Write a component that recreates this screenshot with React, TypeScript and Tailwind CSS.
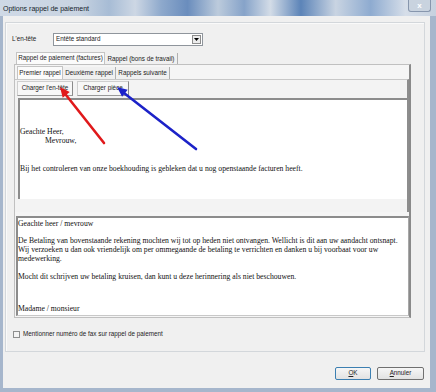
import React from "react";

function Tab({ label, w, active }: { label: string; w: string; active?: boolean }) {
  return (
    <div
      className={
        "h-full flex items-center justify-center border-r border-[#b0b0b0] whitespace-nowrap " +
        w +
        (active ? " bg-[#fbfbfb] border-l border-t border-[#c4c4c4] -mb-px relative z-10" : " bg-[#f0f0f0] mt-[1px]")
      }
    >
      {label}
    </div>
  );
}

export default function App() {
  return (
    <div className="relative w-[436px] h-[392px] overflow-hidden bg-[#f0f0f0] flex flex-col font-['Liberation_Sans',Arial,sans-serif] text-[6.3px] leading-none text-[#222]">
      {/* title bar */}
      <div className="relative h-[16px] shrink-0 flex items-center pl-[3px] bg-[linear-gradient(90deg,#cfd9e6_0%,#c8d3e1_18%,#a7bcd5_25%,#cdd7e4_31%,#8ea9cc_37%,#6a8dbd_43%,#bccbdc_50%,#86a3c9_56%,#d3dce7_62%,#5c84b8_69%,#c9d4e2_77%,#8eabd0_85%,#d6dee9_93%,#c6d1df_100%)]">
        <span className="text-[7px] text-[#141d2b]">Options rappel de paiement</span>
        <div className="absolute right-[5px] top-0 w-[23px] h-[12px] bg-[#c9d3df] border border-t-0 border-[#8796ad] rounded-b-[3px] flex items-center justify-center text-[8px] text-white font-bold">
          x
        </div>
      </div>

      {/* client */}
      <div className="flex-1 border-l-[3px] border-r-[6px] border-b-[4px] border-[#a6b6cc] flex flex-col">
        {/* group panel */}
        <div className="ml-[2px] mt-[6px] w-[420px] h-[330px] border border-[#d3d7db] shadow-[inset_1px_1px_0_#fafafa] flex flex-col">
          {/* header select row */}
          <div className="mt-[10px] h-[13px] flex items-center">
            <div className="pl-[6px] w-[47px]">L'en-tête</div>
            <div className="w-[150px] h-[13px] bg-white border border-[#8f959c] flex items-center pl-[2px] relative">
              <span>Entête standard</span>
              <div className="absolute right-[1px] top-[1px] w-[9px] h-[9px] border border-[#8d8d8d] bg-[#ececec] flex items-center justify-center">
                <svg width="5" height="3" viewBox="0 0 5 3">
                  <polygon points="0,0 5,0 2.5,3" fill="#000" />
                </svg>
              </div>
            </div>
          </div>

          {/* outer tabs */}
          <div className="mt-[6px] ml-[8px] pl-[2px] h-[12px] flex">
            <Tab label="Rappel de paiement (factures)" w="w-[89px]" active />
            <Tab label="Rappel (bons de travail)" w="w-[73px]" />
          </div>
          <div className="ml-[8px] w-[397px] h-[254px] border border-[#c0c0c0] border-r-[2px] border-r-[#8a8a8a] bg-[#f5f5f5] flex flex-col">
            {/* inner tabs */}
            <div className="mt-[1px] pl-[2px] h-[13px] flex">
              <Tab label="Premier rappel" w="w-[46px]" active />
              <Tab label="Deuxième rappel" w="w-[53px]" />
              <Tab label="Rappels suivante" w="w-[54px]" />
            </div>
            <div className="w-[394px] h-[133px] border-t border-[#c8c8c8] border-r-[2px] border-r-[#8d8d8d] bg-[#f3f3f3] flex flex-col">
              {/* buttons */}
              <div className="mt-[1px] pl-[2px] h-[16px] flex gap-[4px]">
                <div className="w-[56px] h-[15px] border border-[#cfcfcf] border-r-[#8a8a8a] border-b-[#9a9a9a] bg-[#f7f7f7] flex items-center justify-center">
                  Charger l'en-tête
                </div>
                <div className="w-[52px] h-[15px] border border-[#cfcfcf] border-r-[#8a8a8a] border-b-[#9a9a9a] bg-[#f7f7f7] flex items-center justify-center">
                  Charger pièce
                </div>
              </div>
              {/* editor 1 */}
              <div className="mt-[1px] ml-[3px] w-[389px] h-[101px] bg-white border-t-2 border-l-2 border-[#8c8c8c] font-['Liberation_Serif','Times_New_Roman',serif] text-[7.7px] leading-[8.9px] text-[#111] pt-[28px] whitespace-nowrap">
                <div>Geachte Heer,</div>
                <div className="pl-[25px]">Mevrouw,</div>
                <div className="h-[19px]" />
                <div>Bij het controleren van onze boekhouding is gebleken dat u nog openstaande facturen heeft.</div>
              </div>
            </div>
            {/* editor 2 */}
            <div className="mt-[4px] ml-[1px] w-[393px] h-[100px] bg-white border-t-2 border-l-2 border-[#8c8c8c] border-r border-b border-r-[#a8a8a8] border-b-[#c8c8c8] font-['Liberation_Serif','Times_New_Roman',serif] text-[7.7px] leading-[8.7px] text-[#111] pt-[2px] whitespace-nowrap overflow-hidden">
              <div>Geachte heer / mevrouw</div>
              <div className="h-[8.7px]" />
              <div>De Betaling van bovenstaande rekening mochten wij tot op heden niet ontvangen. Wellicht is dit aan uw aandacht ontsnapt.</div>
              <div>Wij verzoeken u dan ook vriendelijk om per ommegaande de betaling te verrichten en danken u bij voorbaat voor uw</div>
              <div>medewerking.</div>
              <div className="h-[9px]" />
              <div>Mocht dit schrijven uw betaling kruisen, dan kunt u deze herinnering als niet beschouwen.</div>
              <div className="h-[24px]" />
              <div>Madame / monsieur</div>
            </div>
          </div>

          {/* checkbox */}
          <div className="mt-[13px] pl-[7px] flex items-center gap-[3px]">
            <div className="w-[7px] h-[7px] border border-[#8e8f8f] bg-[#f4f4f4]" />
            <span>Mentionner numéro de fax sur rappel de paiement</span>
          </div>
        </div>

        {/* bottom buttons */}
        <div className="mt-[15px] pr-[6px] flex justify-end gap-[6px]">
          <div className="w-[36px] h-[13px] rounded-[2px] border border-[#3c7fb1] bg-[linear-gradient(#f6f6f6,#e2e2e2)] flex items-center justify-center">
            <span>
              <span className="underline">O</span>K
            </span>
          </div>
          <div className="w-[47px] h-[13px] rounded-[2px] border border-[#707070] bg-[linear-gradient(#f6f6f6,#e2e2e2)] flex items-center justify-center">
            <span>
              <span className="underline">A</span>nnuler
            </span>
          </div>
        </div>
      </div>

      {/* arrows overlay */}
      <svg className="absolute left-0 top-0 pointer-events-none" width="436" height="392" viewBox="0 0 436 392">
        <line x1="104" y1="143" x2="66" y2="95" stroke="#e0191b" strokeWidth="2.6" strokeLinecap="round" />
        <polygon points="60,87 69.7,92.1 62.7,97.7" fill="#e0191b" />
        <line x1="196" y1="149" x2="124" y2="93" stroke="#1c22c8" strokeWidth="2.6" strokeLinecap="round" />
        <polygon points="117,87 127.7,89.7 122.1,96.7" fill="#1c22c8" />
      </svg>
    </div>
  );
}
